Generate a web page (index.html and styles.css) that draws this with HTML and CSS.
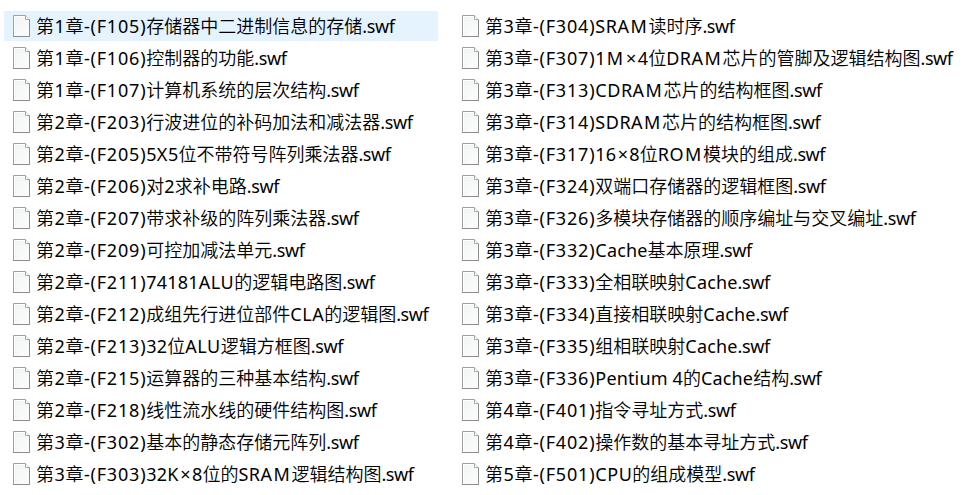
FILE: index.html
```html
<!DOCTYPE html>
<html lang="zh-CN">
<head>
<meta charset="utf-8">
<title>文件列表</title>
<link rel="stylesheet" href="styles.css">
</head>
<body>
<svg class="defs" aria-hidden="true">
  <defs>
    <linearGradient id="paper" x1="0" y1="0" x2="1" y2="1"><stop offset="0" stop-color="#f2f3f4"/><stop offset="1" stop-color="#fcfdfd"/></linearGradient>
    <symbol id="file" viewBox="0 0 17 22">
      <path d="M.5.5H12.5L16.5 4.5V21.5H.5Z" fill="url(#paper)" stroke="#a0a0a0"/>
      <path d="M1.5 20.5V1.5H12" fill="none" stroke="#fff"/>
      <path d="M16.5 4.5V21.5H0" fill="none" stroke="#8c8c8c"/>
      <path d="M12.5.5V4.5H16.5" fill="#fff" stroke="#a6a6a6"/>
    </symbol>
  </defs>
</svg>
<main class="files">
  <ul class="column"></ul>
  <ul class="column"></ul>
</main>
<script src="script.js"></script>
</body>
</html>
```
FILE: script.js
```js
const columns = [
  [
    "第1章-(F105)存储器中二进制信息的存储.swf",
    "第1章-(F106)控制器的功能.swf",
    "第1章-(F107)计算机系统的层次结构.swf",
    "第2章-(F203)行波进位的补码加法和减法器.swf",
    "第2章-(F205)5X5位不带符号阵列乘法器.swf",
    "第2章-(F206)对2求补电路.swf",
    "第2章-(F207)带求补级的阵列乘法器.swf",
    "第2章-(F209)可控加减法单元.swf",
    "第2章-(F211)74181ALU的逻辑电路图.swf",
    "第2章-(F212)成组先行进位部件CLA的逻辑图.swf",
    "第2章-(F213)32位ALU逻辑方框图.swf",
    "第2章-(F215)运算器的三种基本结构.swf",
    "第2章-(F218)线性流水线的硬件结构图.swf",
    "第3章-(F302)基本的静态存储元阵列.swf",
    "第3章-(F303)32K×8位的SRAM逻辑结构图.swf"
  ],
  [
    "第3章-(F304)SRAM读时序.swf",
    "第3章-(F307)1M×4位DRAM芯片的管脚及逻辑结构图.swf",
    "第3章-(F313)CDRAM芯片的结构框图.swf",
    "第3章-(F314)SDRAM芯片的结构框图.swf",
    "第3章-(F317)16×8位ROM模块的组成.swf",
    "第3章-(F324)双端口存储器的逻辑框图.swf",
    "第3章-(F326)多模块存储器的顺序编址与交叉编址.swf",
    "第3章-(F332)Cache基本原理.swf",
    "第3章-(F333)全相联映射Cache.swf",
    "第3章-(F334)直接相联映射Cache.swf",
    "第3章-(F335)组相联映射Cache.swf",
    "第3章-(F336)Pentium 4的Cache结构.swf",
    "第4章-(F401)指令寻址方式.swf",
    "第4章-(F402)操作数的基本寻址方式.swf",
    "第5章-(F501)CPU的组成模型.swf"
  ]
];

// Latin runs inside the titles get their own weight and tracking classes.
function markup(name) {
  const [, prefix, title] = name.match(/^(.*?\))(.*)\.swf$/);
  const head = prefix.replace(/[第章]/g, run => `<span class="han">${run}</span>`);
  const body = title.replace(/[A-Z][a-z]+ ?|[A-Z]+|[0-9]+|×/g, run => {
    if (run === "×") return `<span class="times">×</span>`;
    if (/\d/.test(run)) return `<span class="digits">${run}</span>`;
    if (/[a-z]/.test(run)) return `<span class="word">${run}</span>`;
    return `<span class="caps">${run.replace("M", '<span class="wide">M</span>')}</span>`;
  });
  return `<span class="prefix">${head}</span>${body}<span class="ext">.swf</span>`;
}

document.querySelectorAll(".column").forEach((list, c) => {
  list.innerHTML = columns[c].map((name, i) =>
    `<li class="file${c === 0 && i === 0 ? " hover" : ""}"><svg class="icon"><use href="#file"/></svg><span>${markup(name)}</span></li>`
  ).join("");
});
```
FILE: styles.css
```css
body {
  margin: 0;
  background: #fff;
  color: #000;
  font: 350 18px/30px "Noto Sans", "Noto Sans CJK SC", sans-serif;
  overflow: hidden;
}
.defs { position: absolute; width: 0; height: 0; }
.files {
  display: grid;
  grid-template-columns: 434px 507px;
  gap: 15px;
  padding: 11px 0 0 4px;
}
.column {
  display: flex;
  flex-direction: column;
  gap: 2px;
  margin: 0;
  padding: 0;
  list-style: none;
}
.file {
  display: flex;
  align-items: center;
  gap: 6px;
  height: 30px;
  padding-left: 9px;
  white-space: nowrap;
}
.hover { background: #e5f3ff; }
.icon { flex: none; width: 17px; height: 22px; }
.prefix, .ext, .digits, .caps, .times, .word { font-weight: 400; }
.prefix { letter-spacing: .8px; }
.han { font-weight: 350; letter-spacing: .4px; }
.ext { letter-spacing: -.4px; }
.digits { letter-spacing: .2px; }
.caps { letter-spacing: .5px; }
.word { letter-spacing: .15px; }
.wide { letter-spacing: 1.6px; margin-left: 1px; }
.times { margin: 0 1.3px; }
```
